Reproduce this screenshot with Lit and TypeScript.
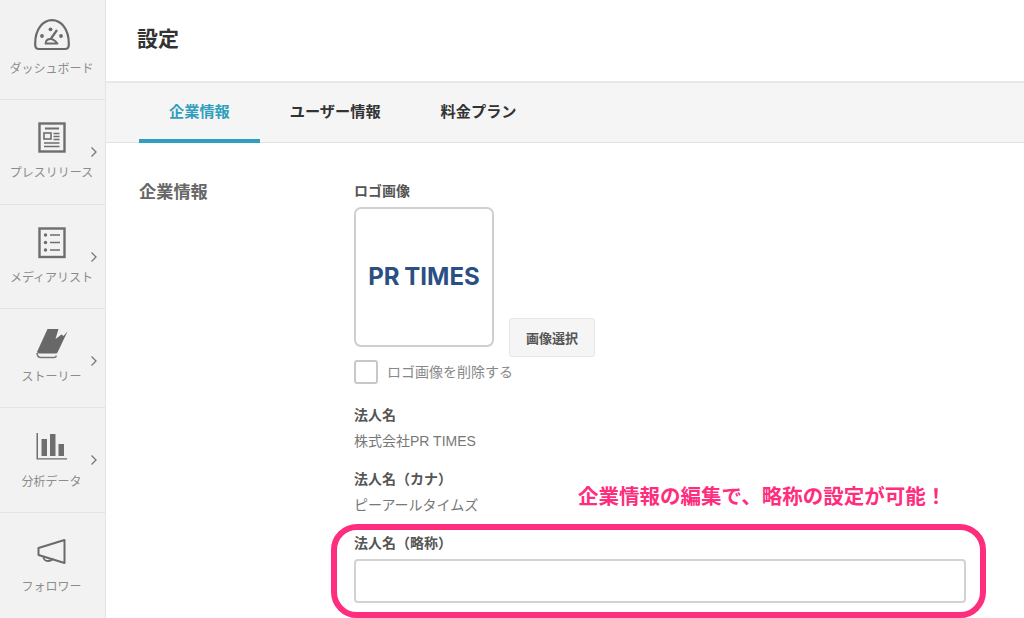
import { LitElement, html, css, svg } from "lit";
import { customElement } from "lit/decorators.js";

const icons: Record<string, unknown> = {
  gauge: svg`<svg viewBox="0 0 36 36" width="36" height="36" fill="none" stroke="#6a6a6a" stroke-width="2.200"><path d="M5 32h26c2.500 0 3.800-1.500 3.800-4v-1.500C34.800 12 27 3.200 18 3.200S1.200 12 1.200 26.500V28c0 2.500 1.300 4 3.800 4z"/><g fill="#6a6a6a" stroke="none"><circle cx="16.500" cy="12.300" r="1.900"/><circle cx="8" cy="19" r="1.900"/><circle cx="27" cy="19" r="1.900"/></g><path d="M11.500 26.500c.3-2.800 2.500-4.500 5-4.500s4.700 1.700 7 4.500z" stroke-width="1.800" stroke-linejoin="round"/><path d="M17 21.500 23 13" stroke-width="2.200"/></svg>`,
  news: svg`<svg viewBox="0 0 36 36" width="36" height="36" fill="none" stroke="#6e6e6e"><rect x="5.500" y="3.500" width="25" height="28" stroke-width="2.400"/><path d="M11 8.500h14" stroke-width="2"/><rect x="10" y="13" width="7" height="6" stroke-width="1.600"/><path d="M19.500 13.500h6M19.500 16.500h6M19.500 19.500h6M10 23h15.500M10 26.500h15.500" stroke-width="1.300"/></svg>`,
  list: svg`<svg viewBox="0 0 36 36" width="36" height="36" fill="none" stroke="#6e6e6e"><rect x="5.500" y="3.500" width="25" height="28.500" stroke-width="2.400"/><g fill="#6e6e6e" stroke="none"><circle cx="11.500" cy="10" r="1.700"/><circle cx="11.500" cy="17.500" r="1.700"/><circle cx="11.500" cy="25" r="1.700"/></g><path d="M16 10h10M16 17.500h10M16 25h10" stroke-width="1.400"/></svg>`,
  book: svg`<svg viewBox="0 0 36 36" width="36" height="36"><path fill="#686868" d="M13.500 4h11l-3 10 6-4.500 2 1.500 4-4.500-10 21c-.6 1-1.200 1-2 1H6c-1.500 0-2.500-.5-3-1.500z"/><path fill="none" stroke="#777" stroke-width="1.600" d="M3 28c.2 2.800 1.500 4.500 4 4.500h13c1.300 0 2-.5 2.500-1.700"/></svg>`,
  chart: svg`<svg viewBox="0 0 36 36" width="36" height="36" fill="#6e6e6e"><path d="M2.500 5H4v25.200h29v1.300H2.500z"/><rect x="7.500" y="11" width="5.500" height="17"/><rect x="16" y="6" width="5.500" height="22"/><rect x="24.500" y="16" width="5.500" height="12"/></svg>`,
  horn: svg`<svg viewBox="0 0 36 36" width="36" height="36" fill="none" stroke="#6a6a6a" stroke-width="2" stroke-linejoin="round"><path d="M30.500 7v23L4.500 22v-7z"/><path d="M9.500 24c.2 2.500 2 4 4.500 4 2.500 0 4-1 5-2.500" stroke-width="1.800"/></svg>`,
};

const nav = [
  { label: "ダッシュボード", icon: "gauge", h: 99, pad: 18, gap: 9, arrow: false },
  { label: "プレスリリース", icon: "news", h: 104, pad: 21, gap: 10, arrow: true },
  { label: "メディアリスト", icon: "list", h: 103, pad: 21, gap: 10, arrow: true },
  { label: "ストーリー", icon: "book", h: 98, pad: 17, gap: 9, arrow: true },
  { label: "分析データ", icon: "chart", h: 104, pad: 21, gap: 11, arrow: true },
  { label: "フォロワー", icon: "horn", h: 105, pad: 21, gap: 11, arrow: false },
];

@customElement("app-root")
export class AppRoot extends LitElement {
  static styles = css`
    :host {
      display: flex;
      width: 1024px;
      height: 618px;
      overflow: hidden;
      position: relative;
      background: #fff;
      font-family: "Liberation Sans", "Noto Sans CJK JP", sans-serif;
      color: #555;
    }
    .side {
      width: 105px;
      flex: none;
      background: #f2f2f2;
      border-right: 1px solid #e4e4e4;
    }
    .item {
      box-sizing: border-box;
      position: relative;
      display: flex;
      flex-direction: column;
      align-items: center;
      padding-right: 2px;
      border-bottom: 1px solid #e4e4e4;
    }
    .item:last-child { border-bottom: 0; }
    .ic { height: 34px; display: flex; align-items: center; justify-content: center; }
    .nl { font-size: 12px; line-height: 16px; color: #8c8c8c; white-space: nowrap; }
    .chev { position: absolute; right: 7px; top: 46px; }
    .main { flex: 1; min-width: 0; display: flex; flex-direction: column; }
    .head {
      box-sizing: border-box;
      height: 83px;
      flex: none;
      padding: 24px 0 0 31px;
      font-size: 21px;
      line-height: 30px;
      font-weight: 700;
      color: #333;
      border-bottom: 2px solid #e8e8e8;
    }
    .tabs {
      display: flex;
      height: 60px;
      flex: none;
      box-sizing: border-box;
      padding-left: 33px;
      background: #f5f5f5;
      border-bottom: 1px solid #e2e2e2;
    }
    .tab {
      box-sizing: border-box;
      height: 60px;
      padding: 0 30px;
      font-size: 15.200px;
      font-weight: 700;
      line-height: 57px;
      color: #333;
      border-bottom: 4px solid transparent;
    }
    .tab.on { color: #2f9fbd; border-bottom-color: #2f9fbd; }
    .body { display: flex; padding: 38px 0 0 33px; }
    .sec { width: 215px; flex: none; font-size: 17.200px; line-height: 22px; font-weight: 700; color: #666; }
    .col { width: 612px; display: flex; flex-direction: column; }
    .lb { font-size: 14px; font-weight: 700; line-height: 20px; color: #555; }
    .logo-row { display: flex; align-items: flex-end; gap: 15px; margin-top: 6px; }
    .logo {
      box-sizing: border-box;
      width: 140px;
      height: 140px;
      border: 2px solid #cfcfcf;
      border-radius: 7px;
      display: flex;
      align-items: center;
      justify-content: center;
    }
    .mark {
      font-family: "Inter", sans-serif;
      font-weight: 700;
      font-size: 24px;
      line-height: 28px;
      word-spacing: -1px;
      color: #2a4f84;
      white-space: nowrap;
    }
    .btn {
      box-sizing: border-box;
      width: 86px;
      height: 39px;
      margin-bottom: -10px;
      display: flex;
      align-items: center;
      justify-content: center;
      background: #f5f5f5;
      border: 1px solid #e6e6e6;
      border-radius: 3px;
      font-size: 13px;
      font-weight: 700;
      color: #555;
    }
    .chk { display: flex; align-items: center; gap: 9px; margin-top: 13px; font-size: 14px; line-height: 24px; color: #888; }
    .box { box-sizing: border-box; width: 24px; height: 24px; border: 2px solid #c8c8c8; border-radius: 3px; }
    .val { font-size: 14px; line-height: 24px; color: #777; margin-top: 4px; }
    .f1 { margin-top: 21px; }
    .f2 { margin-top: 16px; }
    .f3 { margin-top: 16px; }
    .inp { box-sizing: border-box; height: 44px; margin-top: 6px; border: 2px solid #d2d2d2; border-radius: 4px; background: #fff; }
    .hl {
      position: absolute;
      left: 331px;
      top: 524px;
      width: 655px;
      height: 94px;
      box-sizing: border-box;
      border: 6px solid #ff2d7e;
      border-radius: 26px;
    }
    .note {
      position: absolute;
      left: 578px;
      top: 483px;
      font-size: 20.500px;
      line-height: 28px;
      font-weight: 700;
      color: #ff2d7e;
      white-space: nowrap;
    }
  `;

  render() {
    return html`
      <nav class="side">
        ${nav.map(
          (n) => html`<div class="item" style="height:${n.h + 1}px;padding-top:${n.pad}px">
            <div class="ic">${icons[n.icon]}</div>
            <div class="nl" style="margin-top:${n.gap}px">${n.label}</div>
            ${n.arrow
              ? html`<svg class="chev" width="8" height="12" viewBox="0 0 8 12" fill="none" stroke="#777" stroke-width="1.300"><path d="M1.500 1.500 6 6l-4.500 4.500"/></svg>`
              : ""}
          </div>`
        )}
      </nav>
      <main class="main">
        <div class="head">設定</div>
        <div class="tabs">
          <div class="tab on">企業情報</div>
          <div class="tab">ユーザー情報</div>
          <div class="tab">料金プラン</div>
        </div>
        <div class="body">
          <div class="sec">企業情報</div>
          <div class="col">
            <div class="lb">ロゴ画像</div>
            <div class="logo-row">
              <div class="logo"><span class="mark">PR TIMES</span></div>
              <div class="btn">画像選択</div>
            </div>
            <div class="chk"><span class="box"></span>ロゴ画像を削除する</div>
            <div class="lb f1">法人名</div>
            <div class="val">株式会社PR TIMES</div>
            <div class="lb f2">法人名（カナ）</div>
            <div class="val">ピーアールタイムズ</div>
            <div class="lb f3">法人名（略称）</div>
            <div class="inp"></div>
          </div>
        </div>
      </main>
      <div class="note">企業情報の編集で、略称の設定が可能！</div>
      <div class="hl"></div>
    `;
  }
}
